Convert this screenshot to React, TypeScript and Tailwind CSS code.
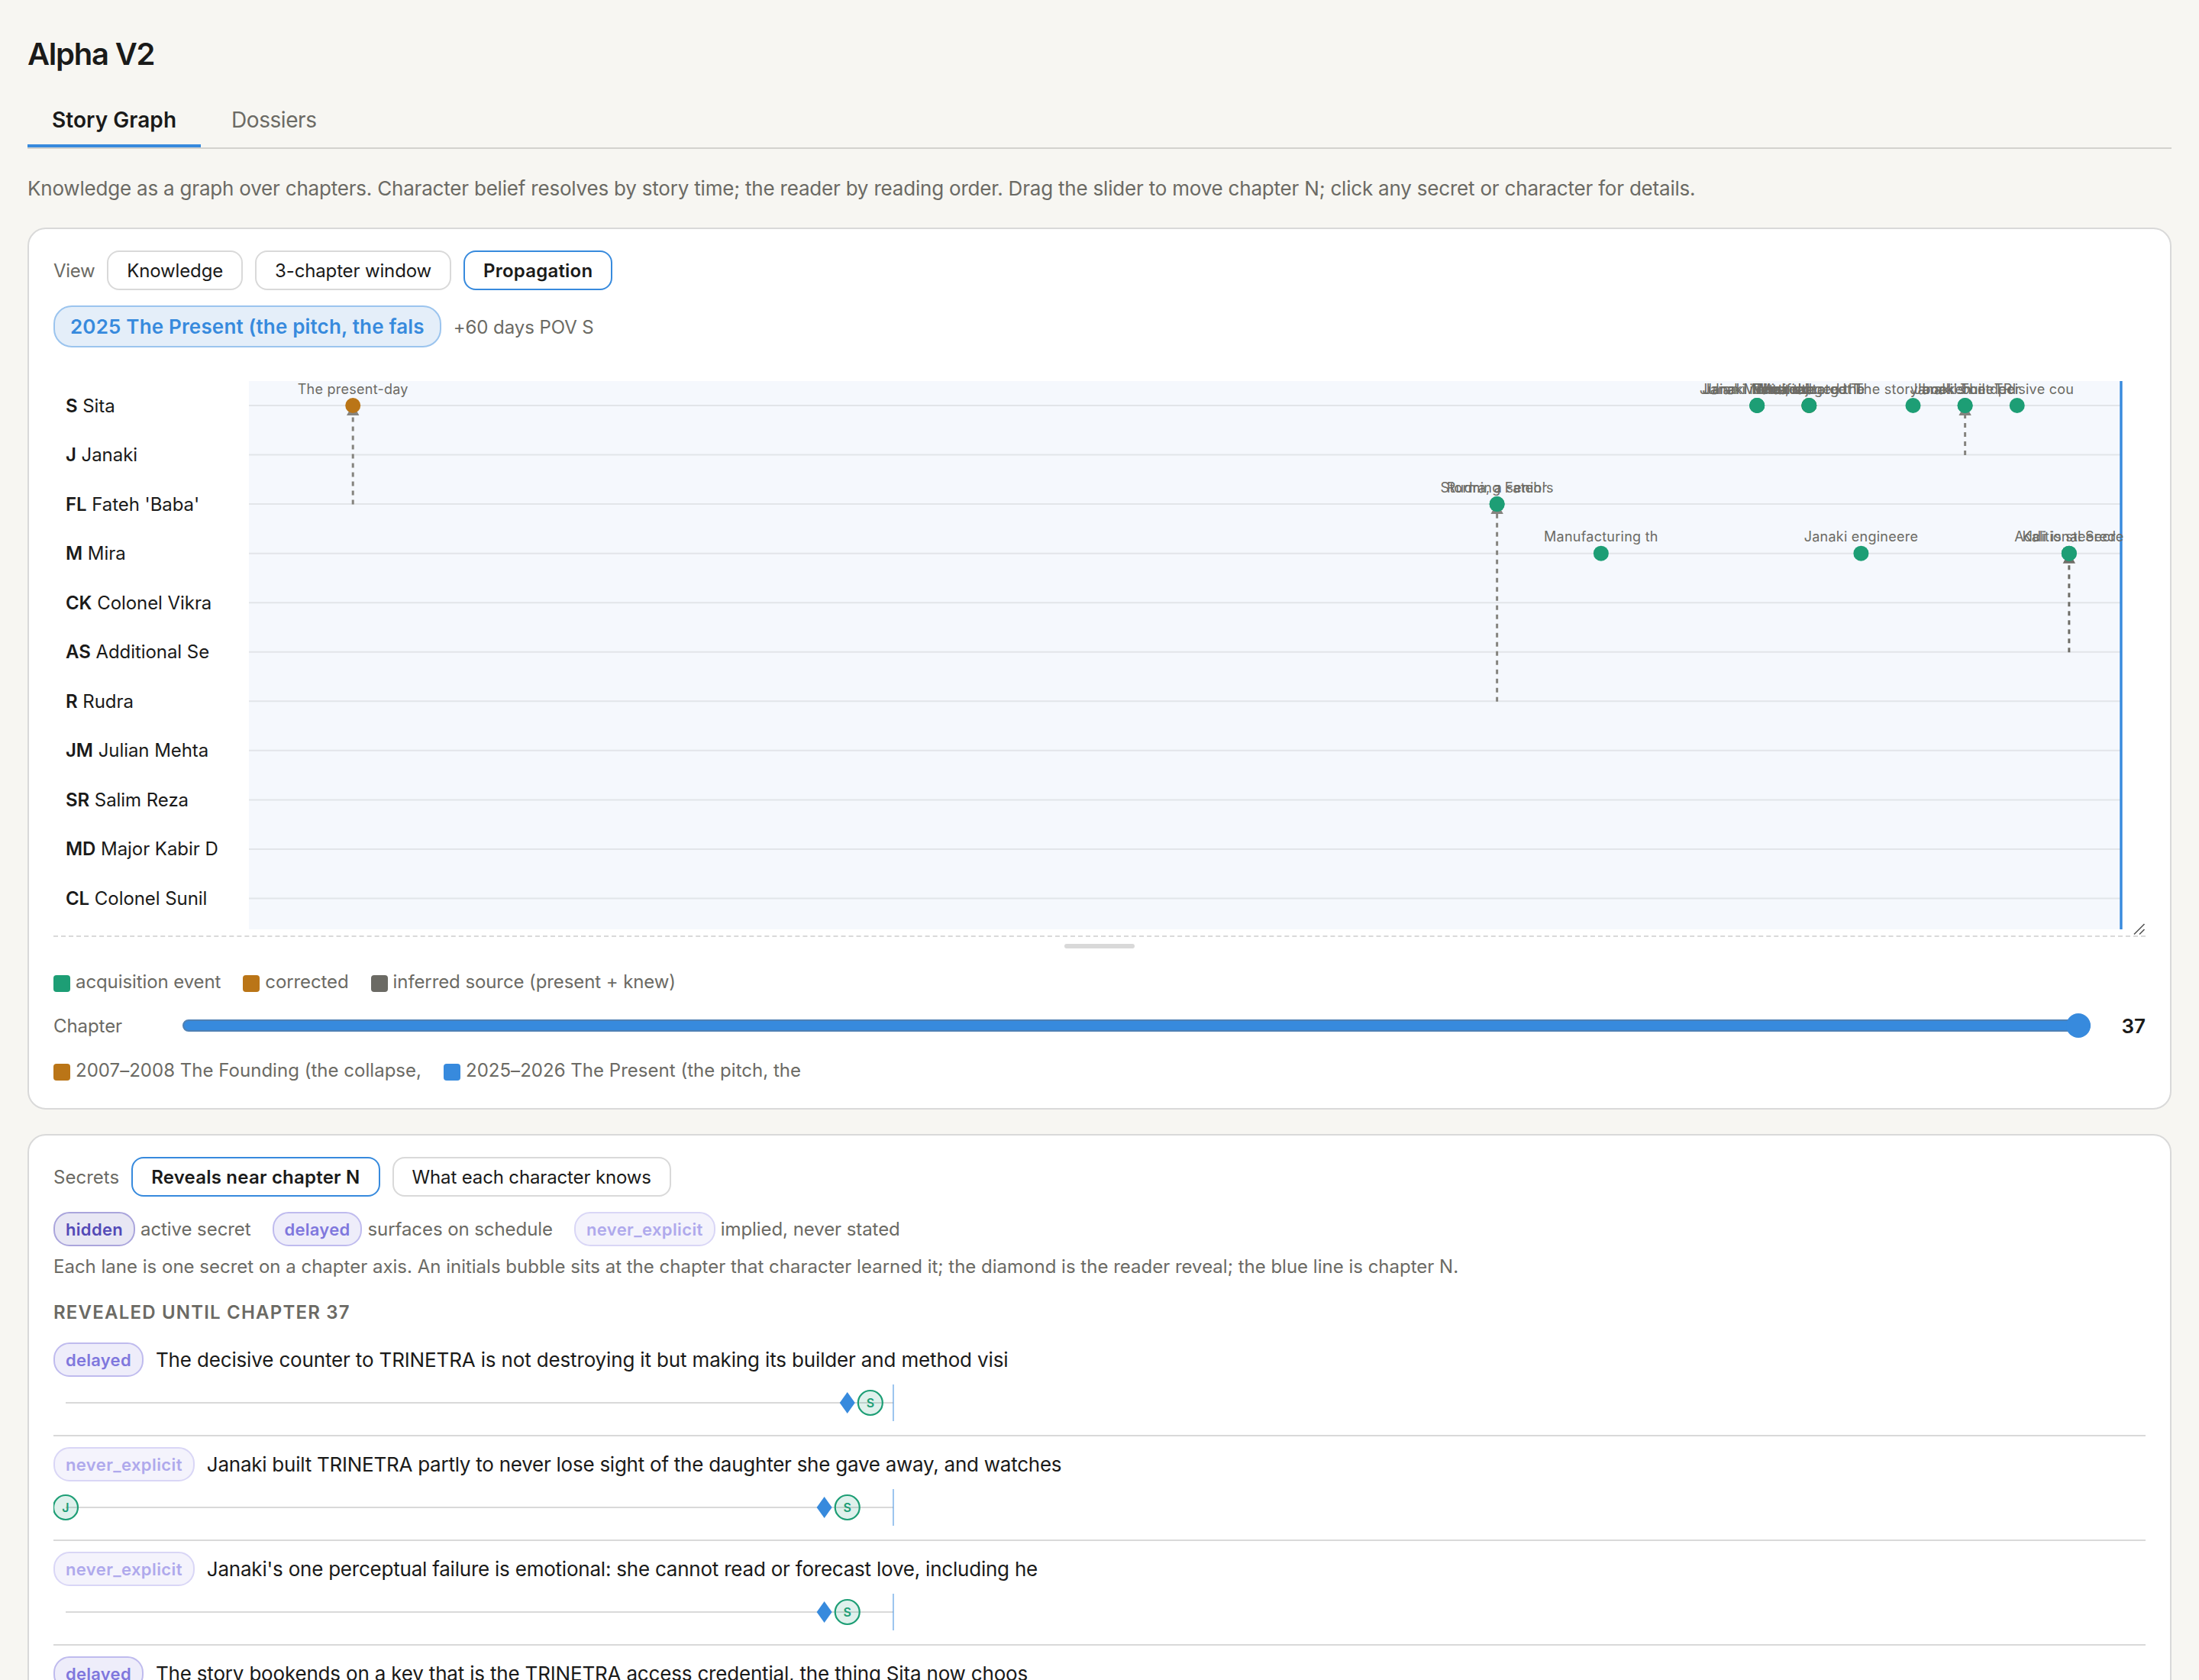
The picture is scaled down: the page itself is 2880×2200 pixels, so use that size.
import { useState } from "react";
import clsx from "clsx";

type Kind = "hidden" | "delayed" | "never_explicit";

type Acquisition = {
  lane: number;
  chapter: number;
  label: string;
  corrected?: boolean;
};

type Source = { from: number; to: number; chapter: number; strong?: boolean };

type Secret = {
  kind: Kind;
  title: string;
  tracking: string;
  reveal: number;
  learned: { initials: string; chapter: number }[];
};

const CHAPTERS = 37;

const characters = [
  { initials: "S", name: "Sita" },
  { initials: "J", name: "Janaki" },
  { initials: "FL", name: "Fateh 'Baba'" },
  { initials: "M", name: "Mira" },
  { initials: "CK", name: "Colonel Vikra" },
  { initials: "AS", name: "Additional Se" },
  { initials: "R", name: "Rudra" },
  { initials: "JM", name: "Julian Mehta" },
  { initials: "SR", name: "Salim Reza" },
  { initials: "MD", name: "Major Kabir D" },
  { initials: "CL", name: "Colonel Sunil" },
];

const acquisitions: Acquisition[] = [
  { lane: 0, chapter: 3, label: "The present-day", corrected: true },
  { lane: 2, chapter: 25, label: "Storming Fateh's" },
  { lane: 2, chapter: 25, label: "Rudra, a senior" },
  { lane: 3, chapter: 27, label: "Manufacturing th" },
  { lane: 0, chapter: 30, label: "Julian Mehta, the" },
  { lane: 0, chapter: 30, label: "Janaki identified" },
  { lane: 0, chapter: 30, label: "Janaki Mira told" },
  { lane: 0, chapter: 31, label: "Fateh staged the", corrected: true },
  { lane: 0, chapter: 31, label: "The real target b" },
  { lane: 0, chapter: 31, label: "Mira rejected T" },
  { lane: 3, chapter: 32, label: "Janaki engineere" },
  { lane: 0, chapter: 33, label: "The story booken" },
  { lane: 0, chapter: 34, label: "Janaki built TRI" },
  { lane: 0, chapter: 34, label: "Janaki's one per" },
  { lane: 0, chapter: 35, label: "The decisive cou" },
  { lane: 3, chapter: 36, label: "Additional Secre" },
  { lane: 3, chapter: 36, label: "Kali is steered" },
];

const sources: Source[] = [
  { from: 2, to: 0, chapter: 3 },
  { from: 6, to: 2, chapter: 25 },
  { from: 1, to: 0, chapter: 34 },
  { from: 5, to: 3, chapter: 36, strong: true },
];

const secrets: Secret[] = [
  {
    kind: "delayed",
    title: "The decisive counter to TRINETRA is not destroying it but making its builder and method visi",
    tracking: "tracking-[-0.0058em]",
    reveal: 35,
    learned: [{ initials: "S", chapter: 36 }],
  },
  {
    kind: "never_explicit",
    title: "Janaki built TRINETRA partly to never lose sight of the daughter she gave away, and watches",
    tracking: "tracking-[-0.0096em]",
    reveal: 34,
    learned: [
      { initials: "J", chapter: 1 },
      { initials: "S", chapter: 35 },
    ],
  },
  {
    kind: "never_explicit",
    title: "Janaki's one perceptual failure is emotional: she cannot read or forecast love, including he",
    tracking: "tracking-[-0.0085em]",
    reveal: 34,
    learned: [{ initials: "S", chapter: 35 }],
  },
  {
    kind: "delayed",
    title: "The story bookends on a key that is the TRINETRA access credential, the thing Sita now choos",
    tracking: "tracking-[-0.007em]",
    reveal: 33,
    learned: [{ initials: "S", chapter: 34 }],
  },
];

const laneY = (lane: number) => 32 + lane * 64.55;
const chapterX = (chapter: number) => 256 + (chapter - 1) * 68.11;
const secretX = (chapter: number) => 16 + (chapter - 1) * 30.11;

function Pill({ children, active, onClick }: { children: string; active: boolean; onClick: () => void }) {
  return (
    <button
      onClick={onClick}
      className={clsx(
        "h-[52px] rounded-[16px] border-2 bg-white px-6 pt-px text-[24px] leading-none text-[#1a1a19] cursor-pointer",
        active ? "border-[#378add] font-semibold tracking-[0.009em]" : "border-[#d9d9d9] tracking-[-0.006em]",
      )}
    >
      {children}
    </button>
  );
}

function Badge({ kind }: { kind: Kind }) {
  return (
    <span
      className={clsx(
        "inline-flex h-[45px] items-center rounded-[21px] border-2 px-[14px] text-[22px] font-semibold leading-none",
        kind === "hidden" && "border-[#aaa5dc] bg-[#e8e7f4] text-[#534ab7] tracking-[0.014em]",
        kind === "delayed" && "border-[#bfbbee] bg-[#eeedfa] text-[#7f77dd] tracking-[0.012em]",
        kind === "never_explicit" && "border-[#d9d6f6] bg-[#f4f3fc] text-[#afa9ec] tracking-[0.018em]",
      )}
    >
      {kind}
    </span>
  );
}

function LegendItem({ swatch, children }: { swatch: string; children: string }) {
  return (
    <span className="flex items-center gap-[7px]">
      <span className={clsx("mt-1 size-[22px] rounded-[4px]", swatch)} />
      {children}
    </span>
  );
}

function PropagationChart({ chapter }: { chapter: number }) {
  return (
    <svg width="2740" height="718" className="block">
      <rect x="256" y="0" width={chapterX(CHAPTERS) - 256} height="718" fill="#f5f8fd" />
      {characters.map((c, i) => (
        <g key={c.initials}>
          <line x1="256" x2={chapterX(CHAPTERS)} y1={laneY(i)} y2={laneY(i)} stroke="#e2e5e9" strokeWidth="2" />
          <text x="16" y={laneY(i) + 8.5} fontSize="24" fill="#1a1a19" letterSpacing="-0.06">
            <tspan fontWeight="600">{c.initials}</tspan> {c.name}
          </text>
        </g>
      ))}
      <line x1={chapterX(chapter)} x2={chapterX(chapter)} y1="0" y2="718" stroke="#378add" strokeWidth="3.4" />

      {sources.map((s) => {
        const x = chapterX(s.chapter);
        const y = laneY(s.to);
        const color = s.strong ? "#6f6e68" : "#85847f";
        return (
          <g key={s.chapter}>
            <line x1={x} x2={x} y1={laneY(s.from) + 0.5} y2={y + 8} stroke={color} strokeWidth="3" strokeDasharray="6 6" />
            <path d={`M${x - 8.2} ${y + 13}L${x} ${y - 2}L${x + 8.2} ${y + 13}Z`} fill={color} />
          </g>
        );
      })}

      {acquisitions.map((a) => (
        <g key={a.label}>
          <circle cx={chapterX(a.chapter)} cy={laneY(a.lane)} r="10" fill={a.corrected ? "#ba7517" : "#1d9e75"} />
          <text
            x={chapterX(a.chapter)}
            y={laneY(a.lane) - 15.5}
            textAnchor="middle"
            fontSize="18"
            letterSpacing="0.25"
            fill="#6b6a64"
          >
            {a.label}
          </text>
        </g>
      ))}
    </svg>
  );
}

function SecretLane({ secret, chapter }: { secret: Secret; chapter: number }) {
  const d = secretX(secret.reveal);
  return (
    <div className="border-b-2 border-[#d9d9d9] pt-[14px] pb-[18px]">
      <div className="flex h-[45px] items-center gap-4">
        <Badge kind={secret.kind} />
        <span className={clsx("text-[26px] leading-none text-[#1a1a19]", secret.tracking)}>{secret.title}</span>
      </div>
      <svg width="1120" height="48" className="mt-[10px] block">
        <line x1="16" x2={secretX(CHAPTERS)} y1="24" y2="24" stroke="#d9d9d9" strokeWidth="2" />
        <line x1={secretX(chapter)} x2={secretX(chapter)} y1="0" y2="48" stroke="#378add" strokeOpacity="0.5" strokeWidth="2" />
        {secret.learned.map((l) => (
          <g key={l.initials}>
            <circle
              cx={secretX(l.chapter)}
              cy="24"
              r="16"
              fill="#1d9e75"
              fillOpacity="0.14"
              stroke="#1d9e75"
              strokeWidth="2.2"
            />
            <text x={secretX(l.chapter)} y="30" textAnchor="middle" fontSize="16" fontWeight="600" fill="#1d9e75">
              {l.initials}
            </text>
          </g>
        ))}
        <path d={`M${d} 10L${d + 10} 24L${d} 38L${d - 10} 24Z`} fill="#378add" />
      </svg>
    </div>
  );
}

export default function App() {
  const [tab, setTab] = useState("Story Graph");
  const [view, setView] = useState("Propagation");
  const [secretView, setSecretView] = useState("Reveals near chapter N");
  const chapter = 37;

  return (
    <div className="h-[2200px] overflow-hidden bg-[#f7f6f2] px-9 pt-[47px] font-[Inter,sans-serif] text-[24px] text-[#6b6a64]">
      <h1 className="text-[40px] font-semibold leading-[48px] tracking-[-0.031em] text-[#1a1a19]">Alpha V2</h1>

      <div className="mt-[30px] flex gap-2 border-b-2 border-[#d3d2ce]">
        {["Story Graph", "Dossiers"].map((t) => (
          <button
            key={t}
            onClick={() => setTab(t)}
            className={clsx(
              "h-[68px] border-b-4 px-8 text-[28px] leading-none cursor-pointer",
              t === tab
                ? "border-[#378add] font-semibold tracking-[0.002em] text-[#1a1a19]"
                : "border-transparent tracking-[-0.016em]",
            )}
          >
            {t}
          </button>
        ))}
      </div>

      <p className="mt-8 text-[26px] leading-10 tracking-[-0.0077em]">
        Knowledge as a graph over chapters. Character belief resolves by story time; the reader by reading order. Drag
        the slider to move chapter N; click any secret or character for details.
      </p>

      <section className="mt-[31px] rounded-[24px] border-2 border-[#d9d9d9] bg-white px-8 pt-7 pb-[31px]">
        <div className="flex items-center gap-4">
          <span className="pt-0.5 tracking-[-0.014em]">View</span>
          {["Knowledge", "3-chapter window", "Propagation"].map((v) => (
            <Pill key={v} active={v === view} onClick={() => setView(v)}>
              {v}
            </Pill>
          ))}
        </div>

        <div className="mt-5 flex h-[55px] items-center gap-4">
          <span className="flex h-full items-center rounded-[24px] border-2 border-[#9bc4ee] bg-[#e4eef9] px-[20px] pt-px text-[26px] font-semibold leading-none tracking-[0.0065em] text-[#378add]">
            2025 The Present (the pitch, the fals
          </span>
          <span className="pt-0.5 tracking-[-0.003em]">+60 days POV S</span>
        </div>

        <div className="relative mt-11 border-b-2 border-dashed border-[#d9d9d9] pb-2">
          <PropagationChart chapter={chapter} />
          <svg width="16" height="16" className="absolute right-0 bottom-0" stroke="#555" strokeWidth="1.6">
            <path d="M1 14.5L14.5 1M8 14.5L14.5 8" />
          </svg>
        </div>
        <div className="mx-auto mt-[9px] h-[6px] w-[92px] rounded-full bg-[#d9d9d9]" />

        <div className="mt-[26px] flex h-9 items-center gap-[29px] leading-9 tracking-[-0.004em]">
          <LegendItem swatch="bg-[#1d9e75]">acquisition event</LegendItem>
          <LegendItem swatch="bg-[#ba7517]">corrected</LegendItem>
          <LegendItem swatch="bg-[#6b6a64]">inferred source (present + knew)</LegendItem>
        </div>

        <div className="mt-[19px] flex h-10 items-center">
          <span className="w-[169px] pt-0.5 tracking-[-0.003em]">Chapter</span>
          <div className="relative flex h-8 flex-1 items-center">
            <div className="h-4 w-full rounded-full border-2 border-[#4f80b3] bg-[#378add]" />
            <div className="absolute right-0 size-8 rounded-full bg-[#378add]" />
          </div>
          <span className="w-[72px] text-right text-[26px] font-semibold text-[#1a1a19]">{chapter}</span>
        </div>

        <div className="mt-[21px] flex h-9 items-center gap-[29px] leading-9 tracking-[0.001em]">
          <LegendItem swatch="bg-[#ba7517]">2007–2008 The Founding (the collapse,</LegendItem>
          <LegendItem swatch="bg-[#378add]">2025–2026 The Present (the pitch, the</LegendItem>
        </div>
      </section>

      <section className="mt-8 h-[900px] rounded-[24px] border-2 border-[#d9d9d9] bg-white px-8 pt-7">
        <div className="flex items-center gap-4">
          <span className="pt-0.5 tracking-[0.001em]">Secrets</span>
          {["Reveals near chapter N", "What each character knows"].map((v) => (
            <Pill key={v} active={v === secretView} onClick={() => setSecretView(v)}>
              {v}
            </Pill>
          ))}
        </div>

        <div className="mt-5 flex h-[45px] items-center gap-7 tracking-[-0.003em]">
          <span className="flex items-center gap-[7px]">
            <Badge kind="hidden" /> active secret
          </span>
          <span className="flex items-center gap-[7px]">
            <Badge kind="delayed" /> surfaces on schedule
          </span>
          <span className="flex items-center gap-[7px]">
            <Badge kind="never_explicit" /> implied, never stated
          </span>
        </div>

        <p className="mt-[9px] leading-9">
          Each lane is one secret on a chapter axis. An initials bubble sits at the chapter that character learned it;
          the diamond is the reader reveal; the blue line is chapter N.
        </p>

        <h2 className="mt-[24px] mb-[7px] font-semibold uppercase leading-9 tracking-[0.05em]">
          Revealed until chapter {chapter}
        </h2>

        {secrets.map((s) => (
          <SecretLane key={s.title} secret={s} chapter={chapter} />
        ))}
      </section>
    </div>
  );
}
